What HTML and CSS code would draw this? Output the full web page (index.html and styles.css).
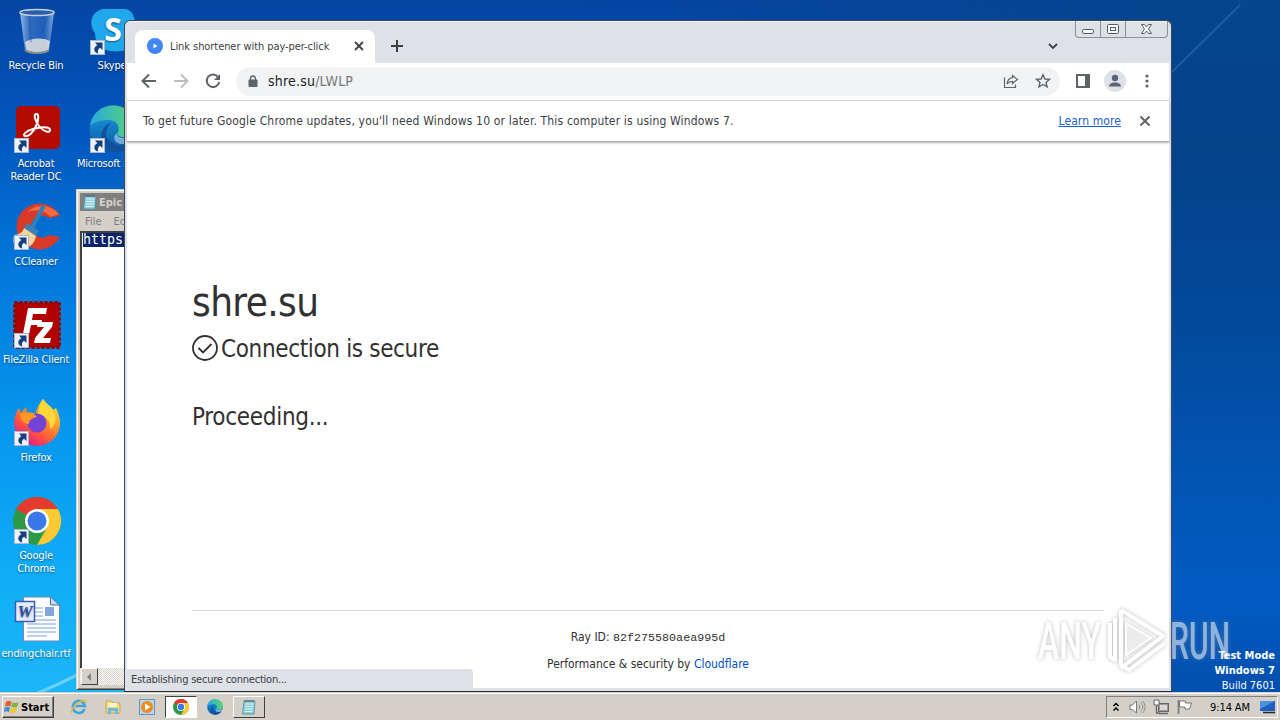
FILE: index.html
```html
<!DOCTYPE html>
<html lang="en">
<head>
    <meta charset="UTF-8">
    <meta name="viewport" content="width=device-width, initial-scale=1.0">
    <title>Desktop</title>
    <link rel="stylesheet" href="styles.css">
</head>
<body>
    <!-- shared icon shapes -->
    <svg class="defs" width="0" height="0">
        <defs>
            <linearGradient id="edgeA" x1="0" y1="0" x2="1" y2="0">
                <stop offset="0" stop-color="#2aa8e0"/>
                <stop offset="1" stop-color="#58d86c"/>
            </linearGradient>
            <linearGradient id="edgeB" x1="0" y1="0" x2="0" y2="1">
                <stop offset="0" stop-color="#1b9de2"/>
                <stop offset="1" stop-color="#0c59a4"/>
            </linearGradient>
            <linearGradient id="fox" x1="1" y1="0" x2="0.3" y2="1">
                <stop offset="0" stop-color="#fff44f"/>
                <stop offset="0.35" stop-color="#ffa928"/>
                <stop offset="0.7" stop-color="#ff5a3c"/>
                <stop offset="1" stop-color="#e31587"/>
            </linearGradient>
            <linearGradient id="glass" x1="0" y1="0" x2="1" y2="0">
                <stop offset="0" stop-color="#b4cff0" stop-opacity="0.85"/>
                <stop offset="0.3" stop-color="#5d8fd6" stop-opacity="0.5"/>
                <stop offset="0.7" stop-color="#3b76cc" stop-opacity="0.5"/>
                <stop offset="1" stop-color="#a3c3ec" stop-opacity="0.8"/>
            </linearGradient>
            <symbol id="chrome" viewBox="0 0 48 48">
                <circle cx="24" cy="24" r="24" fill="#2a9a48"/>
                <path d="M24 24 3.2 12A24 24 0 0 1 44.8 12z" fill="#e33b2e"/>
                <path d="M24 12h20.8A24 24 0 0 1 24 48l10.4-18z" fill="#fcc934"/>
                <path d="M3.2 12 13.6 30 24 12z" fill="#e33b2e"/>
                <path d="M3.2 12 13.6 30 24 36 24 24z" fill="#2a9a48"/>
                <circle cx="24" cy="24" r="12" fill="#fff"/>
                <circle cx="24" cy="24" r="9.5" fill="#3b78e7"/>
            </symbol>
            <symbol id="edge" viewBox="0 0 48 48">
                <circle cx="24" cy="24" r="23.5" fill="url(#edgeB)"/>
                <path d="M1 21C3 8 13 .5 24 .5 38 .5 47.500 10 47.500 20c0 8-6 12-12 12-5 0-8-2-7-4 3-4 1-13-9-13-9 0-16 3-18.500 6z" fill="url(#edgeA)"/>
                <path d="M17 29c0-5 3-9 5-11-5 1-10 7-10 15 0 7 6 13 13 14 8 0 15-4 18-10-4 3-9 3-13 3-8-1-13-6-13-11z" fill="#11509a"/>
                <path d="M28 28c-1 3 3 5 8 5 4 0 8-2 10-5l-2 8c-4 3-9 3-13 3-6-2-8-7-3-11z" fill="#d8efff" opacity="0.5"/>
            </symbol>
            <symbol id="shortcut" viewBox="0 0 15 15">
                <rect x="0.500" y="0.500" width="14" height="14" fill="#eef3f9" stroke="#a9b8cc"/>
                <path d="M5 2.500h7.500V10L10 7.800C8 9 7.500 11 8.200 13.500 4 12.500 2.500 8 7.300 5.200z" fill="#173f7d"/>
            </symbol>
            <symbol id="notepad" viewBox="0 0 16 16">
                <path d="M3 2h11l-1 13H1.500z" fill="#8fd0dc" stroke="#4a8c9c" stroke-width="0.800"/>
                <path d="M4.500 5h8M4.200 7.500h8M4 10h8M3.800 12.500h7.500" stroke="#d9f2f5" stroke-width="1"/>
                <path d="M4 1v2M6 1v2M8 1v2M10 1v2M12 1v2" stroke="#555"/>
            </symbol>
        </defs>
    </svg>

    <div class="desktop">
        <svg class="rays" width="1280" height="692">
            <path d="M0 705C60 690 100 660 180 622" fill="none" stroke="#9fe4ff" stroke-width="3" opacity="0.600"/>
            <path d="M1172 72 1240 5" stroke="#5a8fc0" stroke-width="2" opacity="0.300"/>
        </svg>

        <div class="icons">
            <div class="icon">
                <svg width="48" height="48" viewBox="0 0 48 48">
                    <path d="M7 4 12 43c5 4 19 4 24 0l5-39z" fill="url(#glass)"/>
                    <path d="M12 34c6-4 18-5 25-1l-1.500 9c-5 3-17 3-22 0z" fill="#e3e2df" opacity="0.850"/>
                    <path d="M16 8l2 26M27 8l8-1-6 18" stroke="#1b52a8" stroke-width="2" fill="none" opacity="0.350"/>
                    <ellipse cx="24" cy="4.500" rx="17" ry="3" fill="#2a5fae" stroke="#c5cdd8" stroke-width="1.500"/>
                    <path d="M12 42c5 4 19 4 24 0" fill="none" stroke="#8e8c86" stroke-width="2"/>
                </svg>
                <span>Recycle Bin</span>
            </div>
            <div class="icon">
                <svg width="48" height="48" viewBox="0 0 48 48">
                    <rect x="3" y="0" width="44" height="43" rx="5" fill="#b30b00"/>
                    <path d="M12 30c-3-1 1-5 8-7 7-2 17-3 17 1s-7 1-11-4c-3-4-6-11-3-12s3 6 0 12c-3 7-8 11-11 10z" fill="none" stroke="#fff" stroke-width="2"/>
                    <use href="#shortcut" x="1" y="32" width="15" height="15"/>
                </svg>
                <span>Acrobat<br>Reader DC</span>
            </div>
            <div class="icon">
                <svg width="48" height="48" viewBox="0 0 48 48">
                    <path d="M47 12A23 23 0 1 0 47 33l-11-2a11 11 0 1 1 0-17z" fill="#d93a28"/>
                    <path d="M46 10A22 22 0 0 0 14 8c9-3 20-1 23 5z" fill="#f06a45"/>
                    <path d="M30 3 19 24" stroke="#2f7fba" stroke-width="4" stroke-linecap="round"/>
                    <path d="M14 19 26 27 23 32 11 24z" fill="#3a82b3"/>
                    <path d="M11 24 23 32C22 40 15 45 5 46 0 42 0 36 1 31 6 31 10 28 11 24z" fill="#f1d5a0"/>
                    <path d="M10 31 6 44M16 33l-5 11" stroke="#c79c5c"/>
                    <use href="#shortcut" x="1" y="31" width="15" height="15"/>
                </svg>
                <span>CCleaner</span>
            </div>
            <div class="icon">
                <svg width="48" height="48" viewBox="0 0 48 48">
                    <rect x="1.500" y="0.500" width="45" height="45" fill="#b00000" stroke="#8f0000" stroke-width="3" stroke-dasharray="3 2"/>
                    <path d="M15 6h19l-1 6H20l-1 6h10l-1 5H18l-3 14H9z" fill="#fff"/>
                    <path d="M25 20h15l-1 5-9 11h8l-1 5H21l1-5 9-11h-7z" fill="#fff"/>
                    <use href="#shortcut" x="1" y="31" width="15" height="15"/>
                </svg>
                <span>FileZilla Client</span>
            </div>
            <div class="icon">
                <svg width="48" height="48" viewBox="0 1 48 48">
                    <path d="M30 0c3 5 8 7 10 11l3-2c4 8 5 16 3 22A23 23 0 0 1 2 30C0 22 2 15 6 9l2 5 5-6 1 6c4-1 7 0 9 1C23 9 27 4 30 0z" fill="url(#fox)"/>
                    <path d="M30 0c3 5 8 7 10 11 5 8 2 17-3 19 1-7-3-13-12-14 0-6 2-11 5-16z" fill="#ffd93a"/>
                    <circle cx="24" cy="24" r="9.500" fill="#7542d6"/>
                    <path d="M7 15c6-3 14-1 17 3-5 1-8 3-8 7-6 0-9-5-9-10z" fill="#ff9722"/>
                    <use href="#shortcut" x="1" y="32" width="15" height="15"/>
                </svg>
                <span>Firefox</span>
            </div>
            <div class="icon">
                <svg width="48" height="48">
                    <use href="#chrome" x="0" y="-1" width="48" height="48"/>
                    <use href="#shortcut" x="1" y="31" width="15" height="15"/>
                </svg>
                <span>Google<br>Chrome</span>
            </div>
            <div class="icon">
                <svg width="48" height="48" viewBox="0 0 48 48">
                    <path d="M10.500 1h27l9 8v36h-36z" fill="#fbfdff" stroke="#6c89b8"/>
                    <path d="M37.500 1v8h9z" fill="#c9d8ee" stroke="#4f71ab"/>
                    <path d="M22 12h8M22 16h8M22 20h8M14 24h29M14 28h29M14 32h29M14 36h29M14 40h20" stroke="#7fa4d8" stroke-width="1.200"/>
                    <rect x="32" y="11" width="9" height="9" fill="#7ea8dc"/>
                    <rect x="2.500" y="5.500" width="19" height="20" fill="#e6eefb" stroke="#3a5dac" stroke-width="1.500"/>
                    <text x="12" y="21" class="word-letter">W</text>
                </svg>
                <span>endingchair.rtf</span>
            </div>
        </div>

        <div class="icons second">
            <div class="icon">
                <svg width="48" height="48" viewBox="0 0 48 48">
                    <path d="M15 1h20c8 0 12 8 11 20 3 10-2 22-14 22-16 2-26-4-26-18C-2 14 4 2 15 1z" fill="#1fa9ec"/>
                    <text x="24" y="33" class="skype-letter">S</text>
                    <use href="#shortcut" x="1" y="32" width="15" height="15"/>
                </svg>
                <span>Skype</span>
            </div>
            <div class="icon">
                <svg width="48" height="48">
                    <use href="#edge" x="0" y="-1" width="48" height="48"/>
                    <use href="#shortcut" x="1" y="32" width="15" height="15"/>
                </svg>
                <span>Microsoft Edge</span>
            </div>
        </div>

        <div class="notepad">
            <div class="notepad-title">
                <svg width="16" height="16"><use href="#notepad" width="16" height="16"/></svg>
                <span>Epic</span>
            </div>
            <div class="notepad-menu"><span>File</span><span>Edit</span></div>
            <div class="notepad-edit"><span>https://</span></div>
            <div class="notepad-scroll"><button>
                <svg width="6" height="8"><path d="M5 0v8L1 4z" fill="#808080"/></svg>
            </button></div>
        </div>

        <div class="browser">
            <div class="caption-buttons">
                <span><svg width="24" height="16"><rect x="6.500" y="8.500" width="11" height="4" rx="1.500" fill="#fff" stroke="#555a66"/></svg></span>
                <span><svg width="24" height="16"><rect x="6.500" y="3.500" width="11" height="9" rx="1" fill="#fff" stroke="#555a66"/><rect x="9.500" y="6.500" width="5" height="3" fill="#fff" stroke="#555a66"/></svg></span>
                <span><svg width="41" height="16"><path d="M15.500 3.500h3l2 2.500 2-2.500h3L22.500 8l3 4.500h-3l-2-2.500-2 2.500h-3l3-4.500z" fill="#fff" stroke="#555a66"/></svg></span>
            </div>
            <div class="tabstrip">
                <div class="tab">
                    <svg width="16" height="16"><circle cx="8" cy="8" r="8" fill="#4285f4"/><path d="M6.500 5.500v5l4-2.500z" fill="#fff"/></svg>
                    <span>Link shortener with pay-per-click</span>
                    <svg class="tab-close" width="10" height="10"><path d="M1 1l8 8M9 1l-8 8" stroke="#3c4043" stroke-width="1.800"/></svg>
                </div>
                <svg class="tab-new" width="12" height="12"><path d="M6 0v12M0 6h12" stroke="#3c4043" stroke-width="2"/></svg>
                <svg class="tab-search" width="10" height="7"><path d="M1 1l4 4 4-4" fill="none" stroke="#3c4043" stroke-width="1.800"/></svg>
            </div>

            <div class="toolbar">
                <svg width="16" height="16"><path d="M15 8H2M8 1.500 1.500 8 8 14.500" fill="none" stroke="#5f6368" stroke-width="2"/></svg>
                <svg width="16" height="16"><path d="M1 8h13M8 1.500 14.500 8 8 14.500" fill="none" stroke="#bcbec1" stroke-width="2"/></svg>
                <svg width="16" height="16"><path d="M13.200 4.200A6.300 6.300 0 1 0 14.200 9" fill="none" stroke="#5f6368" stroke-width="2"/><path d="M15 1v6H9z" fill="#5f6368"/></svg>
                <div class="omnibox">
                    <svg width="10" height="13"><rect x="0.500" y="4.500" width="9" height="7.500" rx="1" fill="#5f6368"/><path d="M2.500 5V3.500a2.500 2.500 0 0 1 5 0V5" fill="none" stroke="#5f6368" stroke-width="1.300"/></svg>
                    <span class="url">shre.su<i>/LWLP</i></span>
                    <svg width="16" height="16"><path d="M1.500 4.500v10h11v-3" fill="none" stroke="#5f6368" stroke-width="1.200"/><path d="M9.500 2.500 14.500 6.500 9.500 10.500V8.300C7 8.300 5.500 9 4 11c.5-3.500 2-5.800 5.500-6.300z" fill="none" stroke="#5f6368" stroke-width="1.200"/></svg>
                    <svg class="star" width="16" height="16"><path d="M8 1.800 9.900 6l4.600.4-3.500 3 1.100 4.500L8 11.500l-4.100 2.400L5 9.400l-3.500-3L6.100 6z" fill="none" stroke="#5f6368" stroke-width="1.400"/></svg>
                </div>
                <svg width="14" height="14"><rect x="1" y="1" width="12" height="12" fill="none" stroke="#5f6368" stroke-width="2"/><path d="M9 1h4v12H9z" fill="#5f6368"/></svg>
                <svg class="avatar" width="22" height="22"><circle cx="11" cy="11" r="11" fill="#dee1e6"/><circle cx="11" cy="8" r="3.200" fill="#5a6377"/><path d="M5 16.500c0-5.500 12-5.500 12 0z" fill="#5a6377"/></svg>
                <svg width="4" height="14"><circle cx="2" cy="2" r="1.600" fill="#5f6368"/><circle cx="2" cy="7" r="1.600" fill="#5f6368"/><circle cx="2" cy="12" r="1.600" fill="#5f6368"/></svg>
            </div>

            <div class="infobar">
                <span class="message">To get future Google Chrome updates, you'll need Windows 10 or later. This computer is using Windows 7.</span>
                <a class="learn">Learn more</a>
                <svg width="10" height="10"><path d="M.5.5l9 9M9.500.5l-9 9" stroke="#5f6368" stroke-width="2"/></svg>
            </div>

            <div class="page">
                <h1><span>shre.su</span></h1>
                <h2 class="secure">
                    <svg width="26" height="26"><circle cx="13" cy="13" r="12" fill="none" stroke="#313131" stroke-width="1.800"/><path d="M6.500 13 11 17.500 19.500 9" fill="none" stroke="#313131" stroke-width="1.800"/></svg>
                    <span>Connection is secure</span>
                </h2>
                <h2 class="proceeding"><span>Proceeding...</span></h2>
                <div class="footer">
                    <p class="ray">Ray ID: <code>82f275580aea995d</code></p>
                    <p class="perf">Performance &amp; security by <a>Cloudflare</a></p>
                </div>
            </div>
            <div class="status"><span>Establishing secure connection...</span></div>
        </div>

        <div class="build">
            <b>Test Mode</b>
            <b>Windows 7</b>
            <span>Build 7601</span>
        </div>

        <svg class="watermark" width="200" height="80" viewBox="0 0 200 80">
            <text x="4" y="54" textLength="63" lengthAdjust="spacingAndGlyphs">ANY</text>
            <g fill="none" stroke-linejoin="round">
                <path class="outer" d="M76 18v34l5 3V13M87 5l42 26-42 32M87 5v55l8 5 36-27"/>
                <path class="inner" d="M92 18 117 33 92 50z"/>
            </g>
            <text x="136" y="54" textLength="60" lengthAdjust="spacingAndGlyphs">RUN</text>
        </svg>
    </div>

    <div class="taskbar">
        <div class="start">
            <svg width="16" height="16" viewBox="0 0 16 16"><path d="M2 3c2-1.500 4-1 5.500 0L6.300 7.500C4.500 6.500 3 6.500 1 7.500z" fill="#e8562a"/><path d="M8.500 3.300c2 1 4 1 6-.3l-1.200 4.700c-2 1-4 1-6 0z" fill="#7db93a"/><path d="M.8 8.500c2-1 3.500-1 5.300 0L5 13c-2-1-3.500-1-5 0z" fill="#3f8fd8"/><path d="M7 8.800c2 1 4 1 6 0L11.800 13.300c-2 1-4 1-6 0z" fill="#f5c32e"/></svg>
            <b>Start</b>
        </div>
        <div class="tasks">
            <span class="task"><svg width="18" height="16"><path d="M14.500 10a6 6 0 1 1 .3-3H5" fill="none" stroke="#3fa4dc" stroke-width="2.600"/><path d="M2 14C-1 11 9 1 15 1.500c2 .5 1 2 .5 3" fill="none" stroke="#e8b93e" stroke-width="1.300"/></svg></span>
            <span class="task"><svg width="16" height="16"><path d="M1 2h6l1 2h7v10H1z" fill="#f2d57c" stroke="#c9a850"/><path d="M3 4h9v4H3z" fill="#fff6cc"/><path d="M3 15V9h10v6h-3v-3H6v3z" fill="#6db9e0"/></svg></span>
            <span class="task"><svg width="16" height="16"><rect x="0.500" y="0.500" width="15" height="15" fill="#b8d3ea" stroke="#5b98cc"/><circle cx="8" cy="8" r="6" fill="#f28a15"/><path d="M6 4.500v7L11.500 8z" fill="#fff"/></svg></span>
            <span class="task active"><svg width="16" height="16"><use href="#chrome" width="16" height="16"/></svg></span>
            <span class="task"><svg width="16" height="16"><use href="#edge" width="16" height="16"/></svg></span>
            <span class="task open"><svg width="16" height="16"><use href="#notepad" width="16" height="16"/></svg></span>
        </div>
        <div class="tray">
            <svg width="8" height="10"><path d="M1.500 4 4 1.500 6.500 4M1.500 8.500 4 6l2.500 2.500" fill="none" stroke="#000" stroke-width="1.500"/></svg>
            <svg class="sound" width="17" height="14"><path d="M1 5h2.500L7.500 1v12L3.500 9.500H1z" fill="#fff" stroke="#777"/><path d="M9.500 4.500c1.500 1.500 1.500 3.500 0 5M11.500 2.500c3 2.500 3 6.500 0 9M13.500 1c3.500 3.500 3.500 8.500 0 12" fill="none" stroke="#888"/></svg>
            <svg class="net" width="16" height="16"><rect x="5.500" y="4.500" width="10" height="8" fill="#9a9a9a" stroke="#666"/><rect x="7" y="6" width="7" height="5" fill="#d8d8d8"/><path d="M6 14.500h9" stroke="#666" stroke-width="1.500"/><path d="M1 1h5v5H1z" fill="#fff" stroke="#666"/><path d="M3.500 6v8h3" fill="none" stroke="#666" stroke-width="1.300"/></svg>
            <svg class="flag" width="16" height="16"><path d="M1.500 1v14" stroke="#777" stroke-width="1.600"/><path d="M2.500 2h6v2h6l-2 6H8V8H2.500z" fill="#fff" stroke="#777"/></svg>
            <span class="clock">9:14 AM</span>
            <svg class="show-desktop" width="16" height="14"><path d="M0 1h15v10H0z" fill="#1d5fc0"/><path d="M0 1h15L0 9z" fill="#4a91e2"/><path d="M3 12.500h12" stroke="#223" stroke-width="1.500"/></svg>
        </div>
    </div>
</body>
</html>
```
FILE: styles.css
```css
* {
    box-sizing: border-box;
}

body {
    margin: 0;
    width: 1280px;
    height: 720px;
    overflow: hidden;
    font-family: "DejaVu Sans Condensed", "DejaVu Sans", Tahoma, sans-serif;
    font-stretch: condensed;
    font-size: 11px;
}

.defs {
    position: absolute;
}

svg {
    display: block;
    flex: none;
    overflow: visible;
}

.desktop {
    position: relative;
    height: 692px;
    overflow: hidden;
    background: linear-gradient(to bottom, #0545a4 0, #0256bd 130px, #0278dc 270px, #0697ee 430px, #12b0f7 600px, #1cb6f8 100%);
}

/* darker right side of the wallpaper */
.desktop::before {
    content: "";
    position: absolute;
    top: 0;
    right: 0;
    width: 700px;
    height: 100%;
    background: linear-gradient(to bottom, #064590 0, #04428a 150px, #034a9c 330px, #0255b4 480px, #035bc2 600px, #024fae 100%);
    mask-image: linear-gradient(to right, transparent, #000 80%);
}

.rays, .icons, .notepad, .browser, .build, .watermark {
    position: absolute;
}

.rays {
    top: 0;
    left: 0;
}

/* desktop icons */
.icons {
    top: 8px;
    left: -2px;
    width: 76px;
    display: flex;
    flex-direction: column;
}

.icons.second {
    left: 74px;
}

.icon {
    height: 98px;
    display: flex;
    flex-direction: column;
    align-items: center;
    gap: 3px;
    color: #fff;
    line-height: 13px;
    text-align: center;
    white-space: nowrap;
    letter-spacing: -0.2px;
    text-shadow: 0 1px 2px rgba(0, 0, 0, 0.5);
}

.icon svg {
    margin-left: 2px;
}

.word-letter {
    font: italic bold 17px "Liberation Serif", serif;
    text-anchor: middle;
    fill: #2b4fa0;
}

.skype-letter {
    font: bold 32px "Open Sans", sans-serif;
    text-anchor: middle;
    fill: #fff;
}

/* notepad */
.notepad {
    top: 189px;
    left: 76px;
    width: 300px;
    height: 501px;
    padding: 3px 4px 4px 3px;
    background: #d4d0c8;
    border: 1px solid #d4d0c8;
    border-bottom-color: #404040;
    box-shadow: inset 1px 1px #fff, inset 0 -1px #808080;
    display: flex;
    flex-direction: column;
}

.notepad-title {
    height: 18px;
    padding-left: 2px;
    display: flex;
    align-items: center;
    gap: 1px;
    background: #808080;
    color: #d4d0c8;
    font-weight: bold;
}

.notepad-menu {
    height: 20px;
    padding: 0 5px;
    display: flex;
    align-items: center;
    gap: 12px;
    color: #808080;
}

.notepad-edit {
    flex: 1;
    border: 1px solid #404040;
    border-width: 2px 0 0 2px;
    padding-left: 1px;
    background: #fff;
    font: 13.3px/14px "DejaVu Sans Mono", monospace;
}

.notepad-edit span {
    display: inline-block;
    height: 14px;
    background: #0a246a;
    color: #fff;
}

.notepad-scroll {
    height: 17px;
    padding-left: 1px;
    background: repeating-conic-gradient(#fff 0 25%, #d4d0c8 0 50%) 0 0 / 2px 2px;
}

.notepad-scroll button {
    width: 17px;
    height: 17px;
    padding: 0 0 0 4px;
    background: #d4d0c8;
    border: 1px solid #fff;
    border-right-color: #404040;
    border-bottom-color: #404040;
}

/* browser window */
.browser {
    top: 20px;
    left: 124px;
    width: 1048px;
    height: 672px;
    padding: 0 2px 3px;
    border: 1px solid #3b4656;
    border-bottom-color: #2b2f36;
    border-radius: 6px 6px 0 0;
    background: #dee1e6;
    box-shadow: inset 0 1px #f0f2f5;
    display: flex;
    flex-direction: column;
}

.caption-buttons {
    position: absolute;
    top: 0;
    right: 3px;
    display: flex;
    height: 17px;
    border: 1px solid #8b8f98;
    border-top: none;
    border-radius: 0 0 4px 4px;
}

.caption-buttons span + span {
    border-left: 1px solid #8b8f98;
}

.tabstrip {
    height: 42px;
    padding: 9px 111px 0 8px;
    display: flex;
    align-items: center;
}

.tab {
    align-self: stretch;
    width: 240px;
    padding: 0 11px 1px 12px;
    display: flex;
    align-items: center;
    gap: 7px;
    background: #fff;
    border-radius: 8px 8px 0 0;
    color: #3c4043;
    white-space: nowrap;
    letter-spacing: -0.07px;
}

.tab-close {
    margin-left: auto;
}

.tab-new {
    margin: 0 0 1px 16px;
}

.tab-search {
    margin-left: auto;
}

.toolbar {
    height: 38px;
    padding: 0 20px 1px 14px;
    display: flex;
    align-items: center;
    gap: 16px;
    background: #fff;
    border-bottom: 1px solid #d5d7da;
}

.omnibox {
    flex: 1;
    height: 29px;
    margin-left: -1px;
    padding: 0 9px 0 12px;
    display: flex;
    align-items: center;
    border-radius: 15px;
    background: #f1f3f4;
}

.url {
    flex: 1;
    margin-left: 10px;
    color: #202124;
    font-size: 14px;
    letter-spacing: 0.2px;
}

.url i {
    font-style: normal;
    color: #74777b;
}

.star {
    margin-left: 16px;
}

.avatar {
    margin: 0 3px 0 -2px;
}

.infobar {
    position: relative;
    height: 41px;
    padding: 0 19px 1px 16px;
    display: flex;
    align-items: center;
    background: #fff;
    border-bottom: 1px solid #a9abae;
    box-shadow: 0 1px 2px rgba(0, 0, 0, 0.3);
    color: #3c4043;
    font-size: 12px;
    white-space: nowrap;
}

.message {
    flex: 1;
    letter-spacing: 0.165px;
}

.learn {
    margin-right: 19px;
    color: #1a63c4;
    text-decoration: underline;
    letter-spacing: 0.1px;
}

.page {
    flex: 1;
    padding: 0 65px;
    display: flex;
    flex-direction: column;
    background: #fff;
    color: #313131;
}

.page h1, .page h2, .page p {
    margin: 0;
    font-weight: normal;
}

.page h1 {
    margin-top: 130px;
    font-size: 40px;
    line-height: 60px;
    letter-spacing: -0.6px;
}

.page h2 {
    font-size: 24px;
    line-height: 34px;
    letter-spacing: -0.35px;
}

.secure {
    display: flex;
    align-items: center;
    gap: 3px;
}

.secure svg {
    margin-bottom: 2px;
}

.page .proceeding {
    margin-top: 34px;
    letter-spacing: -0.3px;
}

.footer {
    margin-top: auto;
    height: 78px;
    border-top: 1px solid #d5d5d5;
    padding-top: 16px;
    text-align: center;
    font-size: 12px;
    line-height: 20px;
}

.page .perf {
    margin-top: 6px;
}

.footer code {
    font-family: "Liberation Mono", monospace;
    font-size: 11.7px;
}

.footer a {
    color: #0051c3;
}

.status {
    position: absolute;
    left: 2px;
    bottom: 1px;
    width: 346px;
    height: 21px;
    padding-left: 4px;
    line-height: 21px;
    background: #dee1e6;
    border-top-right-radius: 4px;
    color: #3c4043;
    letter-spacing: -0.22px;
}

/* overlays on the desktop */
.build {
    right: 5px;
    bottom: -1px;
    display: flex;
    flex-direction: column;
    align-items: flex-end;
    color: #fff;
    line-height: 15px;
}

.watermark {
    left: 1034px;
    top: 605px;
    opacity: 0.55;
    filter: drop-shadow(0 0 2px #888);
}

.watermark text {
    font: 500 51px Roboto, sans-serif;
    fill: #fff;
}

.watermark .outer {
    stroke: #fff;
    stroke-width: 4;
}

.watermark .inner {
    fill: #ddd;
    stroke: #fff;
    stroke-width: 2;
}

/* taskbar */
.taskbar {
    height: 28px;
    padding: 3px 2px 1px;
    display: flex;
    align-items: center;
    background: #d4d0c8;
    box-shadow: inset 0 1px #d4d0c8, inset 0 2px #fff;
}

.start {
    width: 52px;
    height: 22px;
    padding-left: 1px;
    display: flex;
    align-items: center;
    gap: 1px;
    border: 1px solid #fff;
    border-right-color: #404040;
    border-bottom-color: #404040;
    box-shadow: inset -1px -1px #808080;
}

.tasks {
    margin-left: 9px;
    display: flex;
    gap: 2px;
}

.task {
    width: 32px;
    height: 22px;
    display: flex;
    align-items: center;
    justify-content: center;
    border: 1px solid transparent;
}

.task.active {
    background: #fff;
    border-color: #404040 #fff #fff #404040;
}

.task.open {
    border-color: #fff #404040 #404040 #fff;
}

.tray {
    margin-left: auto;
    height: 22px;
    width: 172px;
    padding: 0 1px 0 5px;
    display: flex;
    align-items: center;
    border: 1px solid #808080;
    border-right-color: #fff;
    border-bottom-color: #fff;
}

.sound {
    margin-left: 9px;
}

.net {
    margin-left: 7px;
}

.flag {
    margin-left: 8px;
}

.clock {
    margin-left: 17px;
    white-space: nowrap;
    letter-spacing: -0.1px;
}

.show-desktop {
    margin-left: auto;
}
```
